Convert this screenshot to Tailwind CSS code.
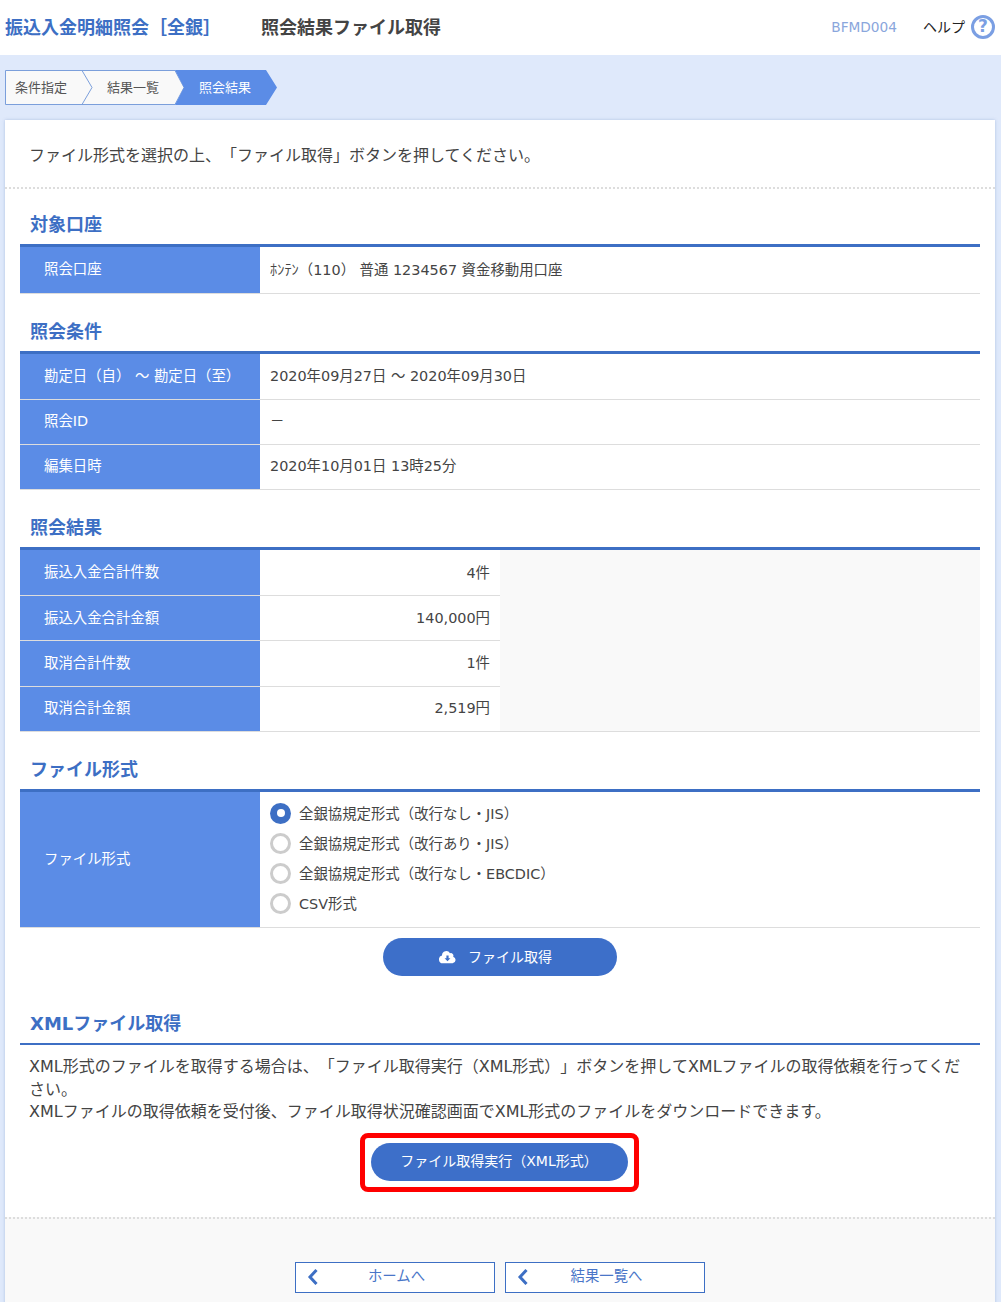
<!DOCTYPE html>
<html lang="ja">
<head>
<meta charset="UTF-8" />
<title>照会結果ファイル取得</title>
<script src="https://cdn.jsdelivr.net/npm/@tailwindcss/browser@4"></script>
</head>
<body class="h-[1302px] overflow-hidden bg-[#dfe9fb] font-['DejaVu_Sans','Noto_Sans_CJK_JP',sans-serif] text-[#444] [text-spacing-trim:space-all]">

  <!-- ヘッダー -->
  <header class="flex h-[55px] items-center bg-white pb-[1px] pl-[5px] pr-[6px]">
    <h1 class="w-[256px] text-[18px] font-bold text-[#3d6fc4]">振込入金明細照会［全銀］</h1>
    <h2 class="text-[18px] font-bold text-[#444]">照会結果ファイル取得</h2>
    <span class="ml-auto text-[13.7px] text-[#8aa6dc]">BFMD004</span>
    <span class="ml-[26px] text-[14px] text-[#222]">ヘルプ</span>
    <span class="ml-[6px] flex h-[24px] w-[24px] items-center justify-center rounded-full border-[3px] border-[#7b9fe3] text-[17px] font-bold text-[#7b9fe3]">?</span>
  </header>

  <!-- ステップ -->
  <div class="flex h-[65px] items-center pl-[5px]">
    <div class="relative flex h-[35px] w-[272px] items-center text-[13px]">
      <svg class="absolute inset-0" width="272" height="35" viewBox="0 0 272 35">
        <path d="M0.5 0.5H170L179 17.5L170 34.5H0.5Z" fill="#f9f9f9" stroke="#7b9fdb" />
        <path d="M77 0.5L87 17.5L77 34.5" fill="none" stroke="#7b9fdb" />
        <path d="M170 0H261L272 17.5L261 35H170L179 17.5Z" fill="#5b8ce6" />
      </svg>
      <span class="relative w-[102px] pl-[10px] text-[#555]">条件指定</span>
      <span class="relative w-[92px] text-[#555]">結果一覧</span>
      <span class="relative text-white">照会結果</span>
    </div>
  </div>

  <main class="mx-[5px] w-[990px] bg-white shadow-[0_0_3px_rgba(90,120,180,0.35)]">
    <p class="flex h-[69px] items-center border-b-2 border-dotted border-[#ddd] pl-[24px] pt-[4px] text-[16px]">ファイル形式を選択の上、「ファイル取得」ボタンを押してください。</p>

    <div class="px-[15px]">
      <!-- 対象口座 -->
      <h3 class="flex h-[55px] items-end pb-[6px] pl-[10px] text-[18px] font-bold text-[#3d6fc4]">対象口座</h3>
      <section class="border-t-[3px] border-[#3d6fc4] text-[14.4px]">
        <div class="flex h-[47px] border-b border-[#ddd]">
          <div class="flex w-[240px] items-center bg-[#5b8ce6] pl-[24px] text-white">照会口座</div>
          <div class="flex items-center pl-[10px] pt-[2px]">ﾎﾝﾃﾝ（110） 普通 1234567 資金移動用口座</div>
        </div>
      </section>

      <!-- 照会条件 -->
      <h3 class="flex h-[57px] items-end pb-[6px] pl-[10px] text-[18px] font-bold text-[#3d6fc4]">照会条件</h3>
      <section class="border-t-[3px] border-[#3d6fc4] text-[14.4px]">
        <div class="flex h-[46px] border-b border-[#ddd]">
          <div class="flex w-[240px] items-center bg-[#5b8ce6] pl-[24px] text-white">勘定日（自） ～ 勘定日（至）</div>
          <div class="flex items-center pl-[10px]">2020年09月27日 ～ 2020年09月30日</div>
        </div>
        <div class="flex h-[45px] border-b border-[#ddd]">
          <div class="flex w-[240px] items-center bg-[#5b8ce6] pl-[24px] text-white">照会ID</div>
          <div class="flex items-center pl-[10px]">－</div>
        </div>
        <div class="flex h-[45px] border-b border-[#ddd]">
          <div class="flex w-[240px] items-center bg-[#5b8ce6] pl-[24px] text-white">編集日時</div>
          <div class="flex items-center pl-[10px]">2020年10月01日 13時25分</div>
        </div>
      </section>

      <!-- 照会結果 -->
      <h3 class="flex h-[57px] items-end pb-[6px] pl-[10px] text-[18px] font-bold text-[#3d6fc4]">照会結果</h3>
      <section class="border-t-[3px] border-[#3d6fc4] bg-[#f9f9f9] text-[14.4px]">
        <div class="flex h-[46px]">
          <div class="flex w-[240px] items-center border-b border-[#ddd] bg-[#5b8ce6] pl-[24px] text-white">振込入金合計件数</div>
          <div class="flex w-[240px] items-center justify-end border-b border-[#ddd] bg-white pr-[10px] pt-[2px]">4件</div>
        </div>
        <div class="flex h-[45px]">
          <div class="flex w-[240px] items-center border-b border-[#ddd] bg-[#5b8ce6] pl-[24px] pt-[2px] text-white">振込入金合計金額</div>
          <div class="flex w-[240px] items-center justify-end border-b border-[#ddd] bg-white pr-[10px] pt-[2px]">140,000円</div>
        </div>
        <div class="flex h-[46px]">
          <div class="flex w-[240px] items-center border-b border-[#ddd] bg-[#5b8ce6] pl-[24px] text-white">取消合計件数</div>
          <div class="flex w-[240px] items-center justify-end border-b border-[#ddd] bg-white pr-[10px]">1件</div>
        </div>
        <div class="flex h-[45px] border-b border-[#ddd]">
          <div class="flex w-[240px] items-center bg-[#5b8ce6] pl-[24px] text-white">取消合計金額</div>
          <div class="flex w-[240px] items-center justify-end bg-white pr-[10px]">2,519円</div>
        </div>
      </section>

      <!-- ファイル形式 -->
      <h3 class="flex h-[57px] items-end pb-[6px] pl-[10px] text-[18px] font-bold text-[#3d6fc4]">ファイル形式</h3>
      <section class="border-t-[3px] border-[#3d6fc4] text-[14.4px]">
        <div class="flex h-[136px] border-b border-[#ddd]">
          <div class="flex w-[240px] items-center bg-[#5b8ce6] pl-[24px] text-white">ファイル形式</div>
          <div class="flex flex-col pl-[10px] pt-[8px]">
            <label class="flex h-[30px] items-center gap-[8px]">
              <span class="mb-[4px] flex h-[21px] w-[21px] items-center justify-center rounded-full bg-[#3d6fc4]"><span class="h-[8px] w-[8px] rounded-full bg-white"></span></span>
              全銀協規定形式（改行なし・JIS）
            </label>
            <label class="flex h-[30px] items-center gap-[8px]">
              <span class="mb-[4px] h-[21px] w-[21px] rounded-full border-[3px] border-[#ccc]"></span>
              全銀協規定形式（改行あり・JIS）
            </label>
            <label class="flex h-[30px] items-center gap-[8px]">
              <span class="mb-[4px] h-[21px] w-[21px] rounded-full border-[3px] border-[#ccc]"></span>
              全銀協規定形式（改行なし・EBCDIC）
            </label>
            <label class="flex h-[30px] items-center gap-[8px]">
              <span class="mb-[4px] h-[21px] w-[21px] rounded-full border-[3px] border-[#ccc]"></span>
              CSV形式
            </label>
          </div>
        </div>
      </section>

      <div class="mt-[10px] flex justify-center">
        <button class="flex h-[38px] w-[234px] items-center justify-center gap-[12px] rounded-full bg-[#3d6fc9] pr-[9px] text-[14px] text-white">
          <svg width="17" height="13" viewBox="0 0 17 13"><path fill="#fff" d="M14.2 5.7A2.6 2.6 0 0 0 11 2.2 4.3 4.3 0 0 0 3 4.3v.3a3.9 3.9 0 0 0 1 7.7h9.6a3.4 3.4 0 0 0 .6-6.6Z"/><path fill="#3d6fc9" d="M7.4 4.5h2.2v2.7h1.8L8.5 10.2 5.6 7.2h1.8Z"/></svg>
          ファイル取得
        </button>
      </div>

      <!-- XMLファイル取得 -->
      <h3 class="flex h-[67px] items-end pb-[6px] pl-[10px] text-[18px] font-bold text-[#3d6fc4]">XMLファイル取得</h3>
      <div class="border-t-[2px] border-[#3d6fc4] pl-[9px] pr-[10px] pt-[11px] text-[16px] leading-[22.5px]">
        <p>XML形式のファイルを取得する場合は、「ファイル取得実行（XML形式）」ボタンを押してXMLファイルの取得依頼を行ってください。</p>
        <p>XMLファイルの取得依頼を受付後、ファイル取得状況確認画面でXML形式のファイルをダウンロードできます。</p>
      </div>

      <div class="mt-[9px] flex justify-center pr-[1px]">
        <div class="rounded-[8px] border-[5px] border-[#f00] px-[6px] pb-[6px] pt-[5px]">
          <button class="flex h-[38px] w-[257px] items-center justify-center rounded-full bg-[#3d6fc9] pr-[1px] text-[14px] text-white">ファイル取得実行（XML形式）</button>
        </div>
      </div>
    </div>

    <!-- フッター -->
    <footer class="mt-[25px] flex h-[90px] justify-center gap-[10px] border-t-2 border-dotted border-[#ddd] bg-[#f9f9f9] pt-[43px]">
      <a class="relative flex h-[31px] w-[200px] items-center justify-center border-[1.5px] border-[#3d6fc4] bg-white pl-[3px] text-[14.4px] text-[#4a76c8]">
        <svg class="absolute left-[11px] top-[6px]" width="12" height="16" viewBox="0 0 12 16"><path d="M9.5 1L3 8l6.5 7" fill="none" stroke="#3d6fc4" stroke-width="3"/></svg>
        ホームへ
      </a>
      <a class="relative flex h-[31px] w-[200px] items-center justify-center border-[1.5px] border-[#3d6fc4] bg-white pl-[3px] text-[14.4px] text-[#4a76c8]">
        <svg class="absolute left-[11px] top-[6px]" width="12" height="16" viewBox="0 0 12 16"><path d="M9.5 1L3 8l6.5 7" fill="none" stroke="#3d6fc4" stroke-width="3"/></svg>
        結果一覧へ
      </a>
    </footer>
  </main>

</body>
</html>
